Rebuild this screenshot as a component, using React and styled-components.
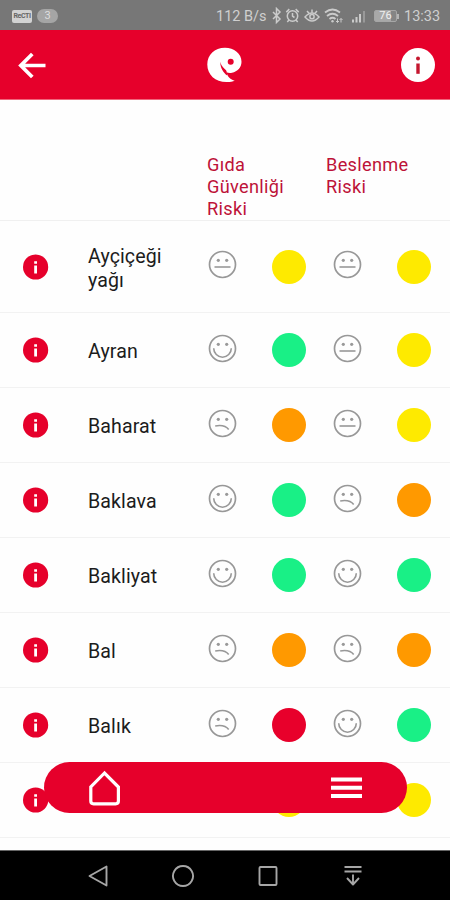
import React from "react";
import styled, { createGlobalStyle } from "styled-components";

const RED = "#e6002b";

const GlobalStyle = createGlobalStyle`
  *, *::before, *::after { box-sizing: border-box; }
  body { margin: 0; background: #fff; font-family: Roboto, "Liberation Sans", sans-serif; }
  svg { display: block; flex: none; }
`;

const Screen = styled.div`
  position: relative;
  width: 450px;
  height: 900px;
  display: flex;
  flex-direction: column;
  overflow: hidden;
  background: #fefefe;
`;

const StatusBar = styled.div`
  flex: none;
  height: 30px;
  display: flex;
  align-items: center;
  justify-content: space-between;
  padding: 2px 9px 0 12px;
  background: #777;
  color: #cfcfcf;
  font-size: 14.5px;
`;

const StatusGroup = styled.div`
  display: flex;
  align-items: center;
`;

const AppBadge = styled.span`
  width: 20px;
  height: 13px;
  border-radius: 2px;
  background: #d2d2d2;
  color: #666;
  font-size: 7px;
  font-weight: 700;
  line-height: 13px;
  text-align: center;
  letter-spacing: -0.4px;
`;

const CountBadge = styled.span`
  width: 21px;
  height: 14px;
  margin-left: 5px;
  border-radius: 7px;
  background: #a5a5a5;
  color: #dedede;
  font-size: 11px;
  line-height: 14px;
  text-align: center;
`;

const Traffic = styled.span`
  width: 52px;
  margin-right: 4px;
  white-space: nowrap;
`;

const Clock = styled.span`
  width: 37px;
  margin-left: 5px;
  white-space: nowrap;
`;

const Battery = styled.span`
  width: 23px;
  height: 12px;
  margin-left: 8px;
  border: 1px solid #a6a6a6;
  border-radius: 2px;
  background: linear-gradient(90deg, #a8a8a8 78%, #858585 78%);
  color: #f0f0f0;
  font-size: 11px;
  line-height: 10px;
  text-align: center;
`;

const BatteryTip = styled.span`
  width: 2px;
  height: 5px;
  background: #b4b4b4;
`;

const AppBar = styled.header`
  flex: none;
  height: 70px;
  display: flex;
  align-items: center;
  justify-content: space-between;
  padding: 0 15px 0 18px;
  background: ${RED};
  border-bottom: 1px solid #f0667c;
`;

const Table = styled.main`
  flex: 1;
  min-height: 0;
  overflow: hidden;
`;

const TableHead = styled.div`
  height: 121px;
  display: grid;
  grid-template-columns: 207px 119px 1fr;
  padding-top: 54px;
  border-bottom: 1px solid #f0f0f0;
`;

const HeadCell = styled.div`
  color: #bd1238;
  font-size: 18.2px;
  line-height: 22px;
  letter-spacing: 0.3px;
  white-space: pre-line;
`;

const Row = styled.div`
  height: ${(p) => (p.$tall ? 92 : 75)}px;
  display: grid;
  grid-template-columns: 88px 120px 64px 61px 64px 1fr;
  align-items: center;
  border-bottom: 1px solid #f2f2f2;
`;

const InfoCell = styled.div`
  padding-left: 23px;
`;

const Name = styled.div`
  padding-top: 4px;
  color: #1c1c1c;
  font-size: 19.6px;
  line-height: 24px;
  letter-spacing: 0.1px;
  white-space: pre-line;
`;

const FaceCell = styled.div`
  padding-bottom: 4px;
`;

const LEVELS = {
  yellow: "#feea00",
  green: "#19f086",
  orange: "#ff9900",
  red: "#e8002b",
};

const Dot = styled.div`
  width: 34px;
  height: 34px;
  border-radius: 50%;
  background: ${(p) => LEVELS[p.$level]};
`;

const FloatingBar = styled.nav`
  position: absolute;
  left: 44px;
  top: 762px;
  width: 363px;
  height: 51px;
  display: flex;
  align-items: center;
  justify-content: space-between;
  padding: 0 45px 0 44px;
  border-radius: 26px;
  background: ${RED};
`;

const SystemNav = styled.footer`
  flex: none;
  height: 50px;
  display: flex;
  align-items: center;
  gap: 61px;
  padding-left: 86px;
  background: #000;
  border-top: 1px solid #666;
`;

function InfoIcon() {
  return (
    <svg width="26" height="26" viewBox="0 0 26 26">
      <circle cx="12.6" cy="13" r="12.6" fill={RED} />
      <path d="M11.2 7.2h2.800v2.500h-2.800zM11.2 11.4h2.800v8h-2.800z" fill="#fff" />
    </svg>
  );
}

const MOUTHS = {
  flat: "M6.500 17h16",
  happy: "M5.700 14.200a8.800 9 0 0 0 17.600 0",
  sad: "M7.200 17c5.500-1 10.500-.4 13.500 3.500",
};

function Face({ mood }) {
  return (
    <svg width="29" height="29" viewBox="0 0 29 29" fill="none" stroke="#989898" strokeWidth="1.7">
      <circle cx="14.500" cy="14.500" r="13" />
      <path d={MOUTHS[mood]} strokeWidth="1.6" />
      <g fill="#999" stroke="none">
        <circle cx="10.300" cy="10.300" r="1.600" />
        <circle cx="18.700" cy="10.300" r="1.600" />
      </g>
    </svg>
  );
}

function StatusIcons() {
  return (
    <svg width="94" height="18" viewBox="0 0 94 18" fill="none" stroke="#cbcbcb" strokeWidth="1.5">
      <path d="M1 5l7 7-3.5 3.5V1.5L8 5l-7 7" />
      <circle cx="20.5" cy="9" r="5.200" />
      <path d="M20.5 6v3.2l2 1.3M14.3 5.1l3-3M26.7 5.1l-3-3M17 13l-1.7 2M24 13l1.7 2" />
      <path d="M33 10q7-8 14 0-7 8-14 0zM35 4l2 2.3M40 2.5v3M45 4l-2 2.3" />
      <circle cx="40" cy="9.7" r="2.1" />
      <path d="M53 5.500q7.500-6 15 0M55 9q5.500-4.500 11 0M57.500 12q3-2.500 6 0" strokeWidth="1.8" />
      <circle cx="60.500" cy="14.300" r="1.200" fill="#cbcbcb" stroke="none" />
      <path d="M65.500 11.500v4M64 14l1.500 1.500L67 14M69 15.500v-4M67.500 13l1.500-1.500 1.500 1.500" strokeWidth="1" />
      <path d="M81 15.500v-3M84.500 15.500V10M88 15.500V7" strokeWidth="2" />
      <path d="M92 15.500V4" stroke="#999" strokeWidth="2" />
    </svg>
  );
}

function BackIcon() {
  return (
    <svg width="28" height="28" viewBox="0 0 28 28" fill="none" stroke="#fff" strokeWidth="3.7">
      <path d="M27.500 14.500H2.500M14.300 3L2.800 14.500 14.300 26" />
    </svg>
  );
}

function Logo() {
  return (
    <svg width="36" height="36" viewBox="0 0 36 36">
      <path
        d="M19 .8C8.500.8 1.300 8 1.300 17.500 1.300 28 9.500 35.200 21 35c3.300-.1 5.700-.5 7.800-1.300C24.500 32.600 21.500 29.800 20.500 25.200c1.500.7 3.500.9 5.500.5C31.500 24.800 35.500 20.500 35.500 14.800 35.500 6.500 28 .8 19 .8z"
        fill="#fff"
      />
      <path d="M14.200 14.800c.6 3 2.100 5 4 6.700 1.600 1.300 2.500 2.200 2.600 3.900l.5 3.200C17.200 25.800 14.200 20.500 14.200 14.800z" fill={RED} />
      <circle cx="24.700" cy="14.800" r="3" fill={RED} />
    </svg>
  );
}

function HeaderInfoIcon() {
  return (
    <svg width="34" height="34" viewBox="0 0 34 34">
      <circle cx="17" cy="17" r="17" fill="#fff" />
      <circle cx="17" cy="10.500" r="2" fill="#c5162e" />
      <path d="M15.300 15.500h3.400v10.300h-3.400z" fill="#c5162e" />
    </svg>
  );
}

function HomeIcon() {
  return (
    <svg width="33" height="36" viewBox="0 0 33 36" fill="none" stroke="#fff" strokeWidth="3.200">
      <path d="M16.500 3L2.800 17v14q0 2.800 2.800 2.800h22q2.800 0 2.800-2.800V17z" />
    </svg>
  );
}

function MenuIcon() {
  return (
    <svg width="31" height="22" viewBox="0 0 31 22" fill="#fff">
      <path d="M0 .5h31v4H0zM0 8.800h31v4H0zM0 17.100h31v4H0z" />
    </svg>
  );
}

function NavIcon({ d }) {
  return (
    <svg width="24" height="24" viewBox="0 0 24 24" fill="none" stroke="#a6a6a6" strokeWidth="1.900">
      <path d={d} strokeLinejoin="round" />
    </svg>
  );
}

const foods = [
  { name: "Ayçiçeği\nyağı", safety: ["flat", "yellow"], nutrition: ["flat", "yellow"] },
  { name: "Ayran", safety: ["happy", "green"], nutrition: ["flat", "yellow"] },
  { name: "Baharat", safety: ["sad", "orange"], nutrition: ["flat", "yellow"] },
  { name: "Baklava", safety: ["happy", "green"], nutrition: ["sad", "orange"] },
  { name: "Bakliyat", safety: ["happy", "green"], nutrition: ["happy", "green"] },
  { name: "Bal", safety: ["sad", "orange"], nutrition: ["sad", "orange"] },
  { name: "Balık", safety: ["sad", "red"], nutrition: ["happy", "green"] },
  { name: "", safety: ["flat", "yellow"], nutrition: ["flat", "yellow"] },
];

function Risk({ value: [mood, level] }) {
  return (
    <>
      <FaceCell><Face mood={mood} /></FaceCell>
      <Dot $level={level} />
    </>
  );
}

export default function App() {
  return (
    <Screen>
      <GlobalStyle />
      <StatusBar>
        <StatusGroup>
          <AppBadge>ReCTI</AppBadge>
          <CountBadge>3</CountBadge>
        </StatusGroup>
        <StatusGroup>
          <Traffic>112 B/s</Traffic>
          <StatusIcons />
          <Battery>76</Battery>
          <BatteryTip />
          <Clock>13:33</Clock>
        </StatusGroup>
      </StatusBar>
      <AppBar>
        <BackIcon />
        <Logo />
        <HeaderInfoIcon />
      </AppBar>
      <Table>
        <TableHead>
          <span />
          <HeadCell>{"Gıda\nGüvenliği\nRiski"}</HeadCell>
          <HeadCell>{"Beslenme\nRiski"}</HeadCell>
        </TableHead>
        {foods.map((food, i) => (
          <Row key={i} $tall={food.name.includes("\n")}>
            <InfoCell><InfoIcon /></InfoCell>
            <Name>{food.name}</Name>
            <Risk value={food.safety} />
            <Risk value={food.nutrition} />
          </Row>
        ))}
      </Table>
      <FloatingBar>
        <HomeIcon />
        <MenuIcon />
      </FloatingBar>
      <SystemNav>
        <NavIcon d="M20.500 2.500v19L3.500 12z" />
        <NavIcon d="M12 2a10 10 0 1 0 .01 0z" />
        <NavIcon d="M4.500 3h15q1 0 1 1v16q0 1-1 1h-15q-1 0-1-1V4q0-1 1-1z" />
        <NavIcon d="M3.500 3h17M3.500 7.500h17M12 10.500v10M6 14l6 6.500 6-6.500" />
      </SystemNav>
    </Screen>
  );
}
